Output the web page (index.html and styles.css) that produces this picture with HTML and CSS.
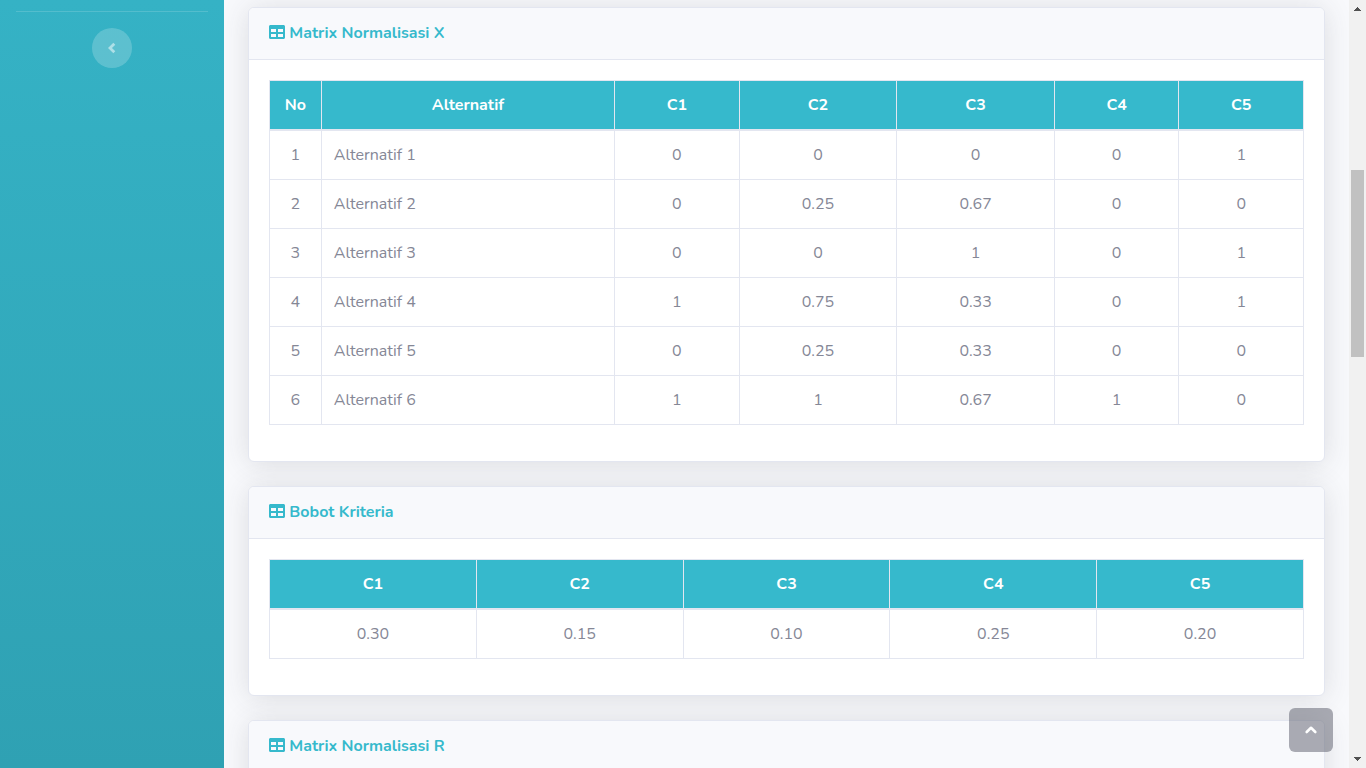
FILE: index.html
```html
<!DOCTYPE html>
<html lang="id">
<head>
<meta charset="utf-8">
<meta name="viewport" content="width=device-width, initial-scale=1">
<title>Matrix Normalisasi</title>
<link rel="stylesheet" href="styles.css">
</head>
<body>
<svg class="sprite" aria-hidden="true">
  <symbol id="icon-table" viewBox="0 0 512 512">
    <path d="M464 32H48C21.490 32 0 53.490 0 80v352c0 26.510 21.490 48 48 48h416c26.510 0 48-21.490 48-48V80c0-26.510-21.490-48-48-48zM224 416H64v-96h160v96zm0-160H64v-96h160v96zm224 160H288v-96h160v96zm0-160H288v-96h160v96z"/>
  </symbol>
</svg>
<div class="wrapper">
  <aside class="sidebar">
    <hr class="divider">
    <button class="toggle" type="button" aria-label="Toggle sidebar">
      <svg width="8" height="12" viewBox="0 0 8 12"><path d="M6.300 1.800 2 6l4.300 4.200" fill="none" stroke="currentColor" stroke-width="2.800"/></svg>
    </button>
  </aside>
  <main class="content">
    <section class="card">
      <header class="card-header"><h6><svg class="icon"><use href="#icon-table"/></svg> Matrix Normalisasi X</h6></header>
      <div class="card-body">
        <table class="matrix">
          <colgroup><col class="col-no"><col class="col-name"><col class="col-narrow"><col class="col-wide"><col class="col-wide"><col class="col-narrow"><col class="col-narrow"></colgroup>
          <thead><tr><th>No</th><th>Alternatif</th><th>C1</th><th>C2</th><th>C3</th><th>C4</th><th>C5</th></tr></thead>
          <tbody>
            <tr><td>1</td><td class="name">Alternatif 1</td><td>0</td><td>0</td><td>0</td><td>0</td><td>1</td></tr>
            <tr><td>2</td><td class="name">Alternatif 2</td><td>0</td><td>0.25</td><td>0.67</td><td>0</td><td>0</td></tr>
            <tr><td>3</td><td class="name">Alternatif 3</td><td>0</td><td>0</td><td>1</td><td>0</td><td>1</td></tr>
            <tr><td>4</td><td class="name">Alternatif 4</td><td>1</td><td>0.75</td><td>0.33</td><td>0</td><td>1</td></tr>
            <tr><td>5</td><td class="name">Alternatif 5</td><td>0</td><td>0.25</td><td>0.33</td><td>0</td><td>0</td></tr>
            <tr><td>6</td><td class="name">Alternatif 6</td><td>1</td><td>1</td><td>0.67</td><td>1</td><td>0</td></tr>
          </tbody>
        </table>
      </div>
    </section>
    <section class="card">
      <header class="card-header"><h6><svg class="icon"><use href="#icon-table"/></svg> Bobot Kriteria</h6></header>
      <div class="card-body">
        <table class="matrix">
          <thead><tr><th>C1</th><th>C2</th><th>C3</th><th>C4</th><th>C5</th></tr></thead>
          <tbody><tr><td>0.30</td><td>0.15</td><td>0.10</td><td>0.25</td><td>0.20</td></tr></tbody>
        </table>
      </div>
    </section>
    <section class="card">
      <header class="card-header"><h6><svg class="icon"><use href="#icon-table"/></svg> Matrix Normalisasi R</h6></header>
      <div class="card-body"></div>
    </section>
  </main>
  <div class="scrollbar" aria-hidden="true">
    <svg width="7" height="4" viewBox="0 0 7 4" shape-rendering="crispEdges"><path d="M3 0h1v1h1v1h1v1h1v1H0V3h1V2h1V1h1z"/></svg>
    <div class="track"><div class="thumb"></div></div>
    <svg width="7" height="4" viewBox="0 0 7 4" shape-rendering="crispEdges"><path d="M0 0h7v1H6v1H5v1H4v1H3V3H2V2H1V1H0z"/></svg>
  </div>
</div>
<a class="to-top" href="#" aria-label="Scroll to top">
  <svg width="14" height="14" viewBox="0 0 14 14"><path d="m2.700 9 4.300-4.200L11.300 9" fill="none" stroke="currentColor" stroke-width="2.600" stroke-linecap="round" stroke-linejoin="round"/></svg>
</a>
</body>
</html>
```
FILE: styles.css
```css
*, *::before, *::after { box-sizing: border-box; }

body {
  margin: 0;
  overflow: hidden;
  background: #f8f9fc;
  color: #858796;
  font: 400 16px/24px Nunito, Lato, sans-serif;
}

.sprite { position: absolute; width: 0; height: 0; }

.wrapper { display: flex; height: 100vh; overflow: hidden; }

.sidebar {
  display: flex;
  flex-direction: column;
  align-items: center;
  flex: 0 0 224px;
  padding: 11px 16px;
  background: linear-gradient(180deg, #35b2c5, #2fa1b3);
}

.divider {
  width: 100%;
  margin: 0 0 16px;
  border: 0;
  border-top: 1px solid rgba(255, 255, 255, .15);
}

.toggle {
  display: flex;
  align-items: center;
  justify-content: center;
  width: 40px;
  height: 40px;
  padding: 0;
  border: 0;
  border-radius: 50%;
  background: rgba(255, 255, 255, .2);
  color: rgba(255, 255, 255, .5);
  cursor: pointer;
}

.content {
  display: flex;
  flex-direction: column;
  gap: 24px;
  flex: 1;
  min-width: 0;
  padding: 7px 24px 0;
  overflow: hidden;
}

.card {
  flex: none;
  border: 1px solid #e3e6f0;
  border-radius: 6px;
  background: #fff;
  box-shadow: 0 2px 28px rgba(58, 59, 69, .15);
}

.card-header {
  padding: 16px 20px;
  border-bottom: 1px solid #e3e6f0;
  border-radius: 5px 5px 0 0;
  background: #f8f9fc;
  color: #36b9cc;
}

.card-header h6 { margin: 0; font-size: 16px; font-weight: 700; line-height: 19px; }

.icon { width: 16px; height: 16px; fill: currentColor; vertical-align: -2px; }

.card-body { padding: 20px 20px 36px; }

.matrix {
  width: 100%;
  table-layout: fixed;
  border-collapse: collapse;
  text-align: center;
}

.matrix th, .matrix td { padding: 12px; border: 1px solid #e3e6f0; }
.matrix th { border-bottom-width: 2px; background: #36b9cc; color: #fff; font-weight: 700; }
.matrix .name { text-align: left; }

.col-no { width: 5%; }
.col-name { width: 28.35%; }
.col-narrow { width: 12.03%; }
.col-wide { width: 15.23%; }

.scrollbar {
  display: flex;
  flex-direction: column;
  align-items: center;
  flex: 0 0 17px;
  padding: 7px 0;
  background: #f1f1f1;
  fill: #505050;
}

.track { flex: 1; width: 13px; }
.thumb { height: 25%; margin-top: 159px; background: #c1c1c1; }

.to-top {
  position: fixed;
  right: 33px;
  bottom: 16px;
  display: flex;
  align-items: center;
  justify-content: center;
  width: 44px;
  height: 44px;
  border-radius: 6px;
  background: rgba(90, 92, 105, .5);
  color: #fff;
}
```
